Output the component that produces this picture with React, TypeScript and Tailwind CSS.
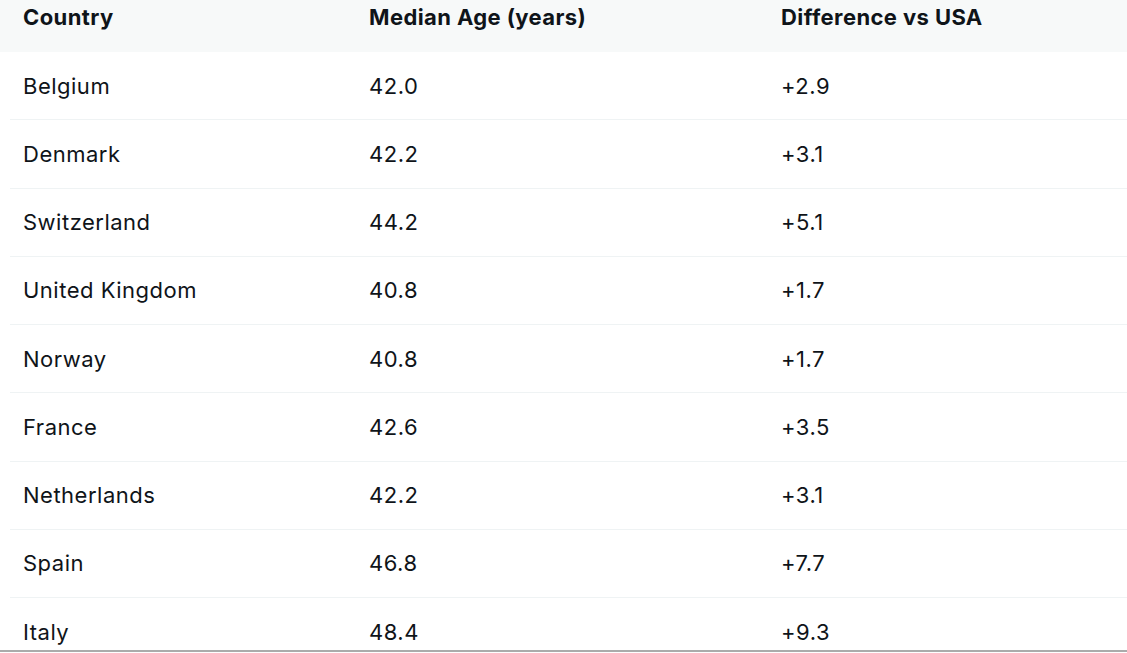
import React from "react";

const rows: [string, string, string][] = [
  ["Belgium", "42.0", "+2.9"],
  ["Denmark", "42.2", "+3.1"],
  ["Switzerland", "44.2", "+5.1"],
  ["United Kingdom", "40.8", "+1.7"],
  ["Norway", "40.8", "+1.7"],
  ["France", "42.6", "+3.5"],
  ["Netherlands", "42.2", "+3.1"],
  ["Spain", "46.8", "+7.7"],
  ["Italy", "48.4", "+9.3"],
];

export default function App() {
  return (
    <div
      className="relative w-[1127px] h-[653px] overflow-hidden bg-white text-[#0f1419]"
      style={{ fontFamily: "Inter, 'Noto Sans', sans-serif" }}
    >
      <div className="h-[52px] bg-[#f7f9f9] pb-[17px] flex items-center">
        <div className="ml-[10px] grid grid-cols-[346px_412px_1fr] w-full text-[22px] tracking-[0.4px] font-bold">
          <div className="pl-[13px]">Country</div>
          <div className="pl-[13px]">Median Age (years)</div>
          <div className="pl-[13px]">Difference vs USA</div>
        </div>
      </div>
      <div className="ml-[10px]">
        {rows.map((r, i) => (
          <div
            key={i}
            className="grid grid-cols-[346px_412px_1fr] h-[68.25px] pt-[1px] items-center border-b border-[#eff3f4] text-[22px] tracking-[0.5px]"
          >
            <div className="pl-[13px]">{r[0]}</div>
            <div className="pl-[13px]">{r[1]}</div>
            <div className="pl-[13px]">{r[2]}</div>
          </div>
        ))}
      </div>
      <div className="absolute left-0 right-0 bottom-[1px] h-[2px] bg-[#ababab]" />
    </div>
  );
}
